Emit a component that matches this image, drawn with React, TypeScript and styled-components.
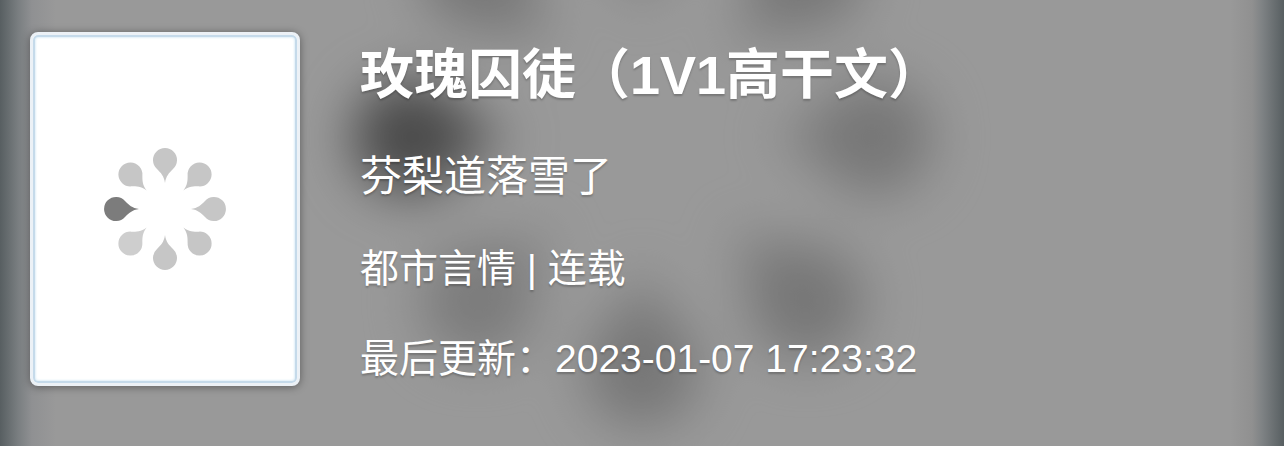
import React from "react";
import styled, { createGlobalStyle } from "styled-components";

const GlobalStyle = createGlobalStyle`
  body {
    margin: 0;
    background: #fff;
    font-family: "Liberation Sans", "Noto Sans CJK SC", sans-serif;
  }
`;

const Banner = styled.header`
  position: relative;
  overflow: hidden;
  display: flex;
  align-items: flex-start;
  gap: 60px;
  padding: 32px 30px 60px;
  background: #999;
`;

const Backdrop = styled.div`
  position: absolute;
  inset: 0;
  display: flex;
  justify-content: center;
  background: #fff;

  &::after {
    content: "";
    position: absolute;
    inset: 0;
    background:
      linear-gradient(to right, rgba(4, 20, 26, 0.44), rgba(20, 40, 50, 0.24) 18px, rgba(60, 70, 90, 0.1) 32px, transparent 56px),
      linear-gradient(to left, rgba(4, 20, 26, 0.44), rgba(20, 40, 50, 0.2) 22px, rgba(40, 40, 40, 0.08) 32px, transparent 54px),
      rgba(0, 0, 0, 0.4);
  }
`;

const BlurredSpinner = styled.div`
  flex: none;
  width: 618px;
  height: 618px;
  margin-top: -172px;
  filter: blur(26px);
`;

const Cover = styled.div`
  position: relative;
  flex: none;
  box-sizing: border-box;
  display: flex;
  align-items: center;
  justify-content: center;
  width: 270px;
  height: 354px;
  border: 3px solid #ecf1f6;
  border-radius: 8px;
  background: #fff;
  box-shadow: inset 0 0 0 2px #c5daea, inset 0 0 2px 3px #e0eff8, 0 1px 8px rgba(0, 0, 0, 0.4);
`;

const CoverSpinner = styled.div`
  width: 130px;
  height: 130px;
`;

const SpinnerSvg = styled.svg`
  display: block;
  width: 100%;
  height: 100%;
`;

const Details = styled.div`
  position: relative;
  display: flex;
  flex-direction: column;
  gap: 46px;
  min-width: 0;
  padding-top: 11px;
  color: #fff;
  text-shadow: 0 2px 2px rgba(0, 0, 0, 0.22);
`;

const Title = styled.h1`
  margin: 0;
  font-size: 54px;
  line-height: 64px;
  font-weight: 700;
`;

const Author = styled.p`
  margin: 0;
  font-size: 42px;
  line-height: 48px;
`;

const Meta = styled.p`
  margin: 0;
  font-size: 39px;
  line-height: 44px;
`;

const petals = [
  { angle: 0, color: "#c6c6c6" },
  { angle: 45, color: "#c6c6c6" },
  { angle: 90, color: "#c6c6c6" },
  { angle: 135, color: "#c6c6c6" },
  { angle: 180, color: "#c6c6c6" },
  { angle: 225, color: "#cecece" },
  { angle: 270, color: "#7c7c7c" },
  { angle: 315, color: "#c6c6c6" },
];

function Spinner() {
  return (
    <SpinnerSvg viewBox="-65 -65 130 130" aria-hidden="true">
      {petals.map(({ angle, color }) => (
        <path
          key={angle}
          d="M0 -26 C-1 -33 -4 -36 -8 -40 A12 12 0 1 1 8 -40 C4 -36 1 -33 0 -26 Z"
          fill={color}
          transform={`rotate(${angle})`}
        />
      ))}
    </SpinnerSvg>
  );
}

export default function App() {
  return (
    <>
      <GlobalStyle />
      <Banner>
        <Backdrop>
          <BlurredSpinner>
            <Spinner />
          </BlurredSpinner>
        </Backdrop>
        <Cover>
          <CoverSpinner>
            <Spinner />
          </CoverSpinner>
        </Cover>
        <Details>
          <Title>玫瑰囚徒（1V1高干文）</Title>
          <Author>芬梨道落雪了</Author>
          <Meta>都市言情 | 连载</Meta>
          <Meta>最后更新：2023-01-07 17:23:32</Meta>
        </Details>
      </Banner>
    </>
  );
}
